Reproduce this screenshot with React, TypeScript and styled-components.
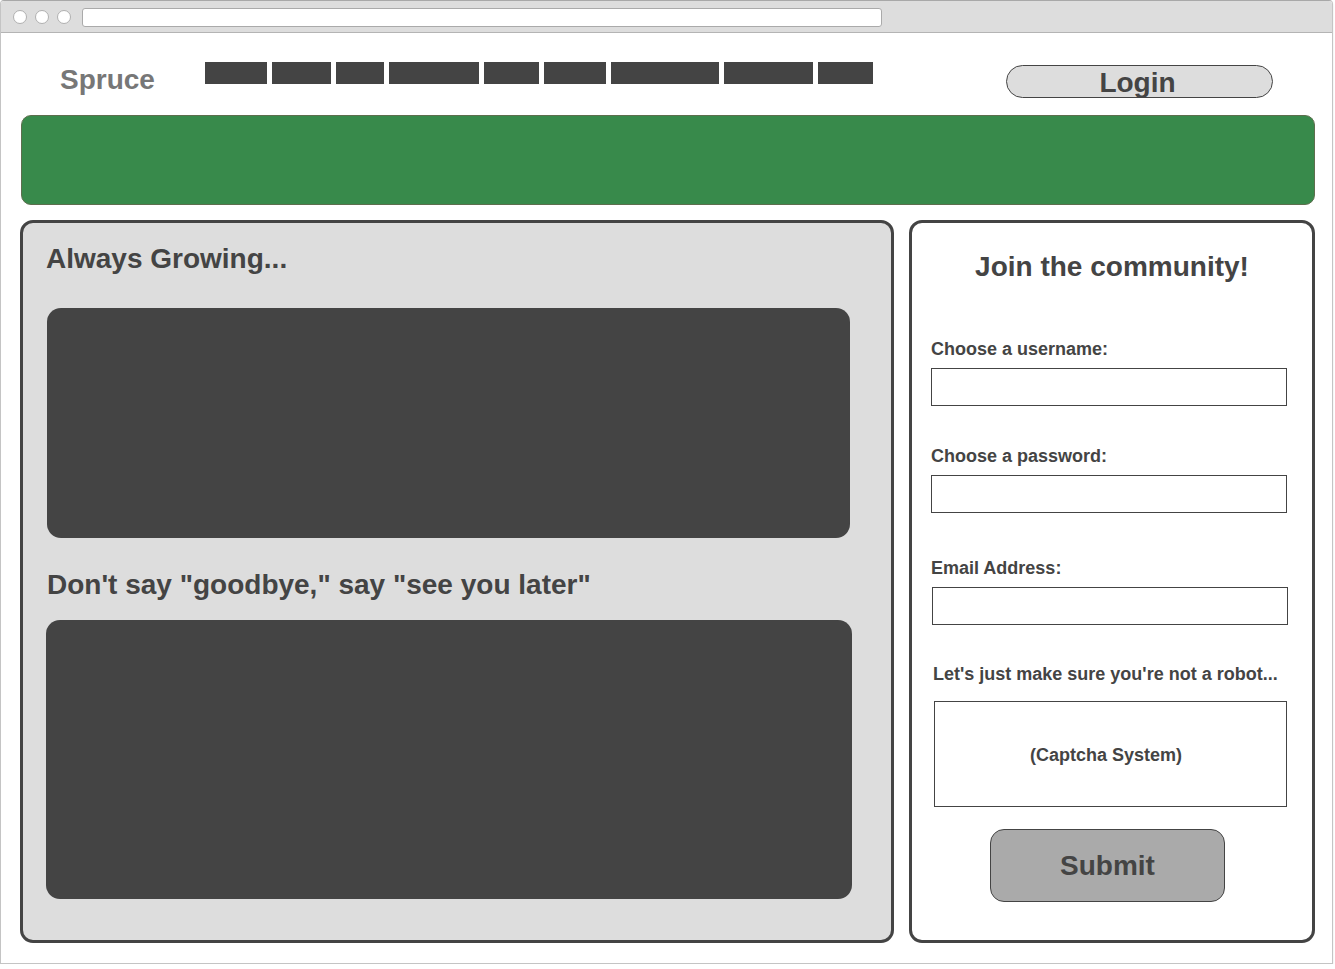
import React from "react";
import styled, { createGlobalStyle } from "styled-components";

const GlobalStyle = createGlobalStyle`
  html, body { margin: 0; padding: 0; background: #ffffff; }
  body { font-family: "Liberation Sans", Arial, sans-serif; color: #444; }
  * { box-sizing: border-box; }
`;

const Window = styled.div`
  width: 1333px;
  height: 964px;
  border: 1px solid #c4c4c4;
  border-top-color: #a8a8a8;
  border-radius: 4px 4px 0 0;
  box-shadow: 0 2px 2px rgba(0, 0, 0, 0.12);
  display: flex;
  flex-direction: column;
  overflow: hidden;
  background: #fff;
`;

const TitleBar = styled.div`
  height: 32px;
  background: #dddddd;
  border-bottom: 1px solid #b4b4b4;
  display: flex;
  align-items: center;
  padding-left: 12px;
  gap: 8px;
`;

const Dot = styled.span`
  width: 14px;
  height: 14px;
  border-radius: 50%;
  background: #fff;
  border: 1px solid #b0b0b0;
`;

const AddressBar = styled.div`
  width: 800px;
  height: 19px;
  margin-left: 3px;
  margin-top: 2px;
  background: #fff;
  border: 1px solid #aaaaaa;
  border-radius: 3px;
`;

const Header = styled.header`
  height: 82px;
  display: flex;
  align-items: flex-start;
  padding: 29px 59px 0 59px;
`;

const Logo = styled.div`
  width: 145px;
  margin-top: 2px;
  font-size: 28px;
  line-height: 32px;
  font-weight: bold;
  color: #777;
`;

const Nav = styled.nav`
  display: flex;
  gap: 5px;
`;

const NavItem = styled.span<{ $w: number }>`
  width: ${(p) => p.$w}px;
  height: 22px;
  background: #444;
`;

const LoginButton = styled.button`
  margin-left: auto;
  margin-top: 3px;
  width: 267px;
  height: 33px;
  border: 1px solid #444;
  border-radius: 17px;
  background: #dddddd;
  padding: 1px 4px 0 0;
  font-family: "Liberation Sans", Arial, sans-serif;
  font-size: 28px;
  font-weight: bold;
  line-height: 31px;
  color: #444;
`;

const Banner = styled.div`
  height: 90px;
  margin: 0 17px 0 20px;
  background: #388a4b;
  border: 1px solid #5d6e4e;
  border-radius: 10px;
`;

const Main = styled.main`
  display: flex;
  gap: 15px;
  padding: 15px 17px 20px 19px;
`;

const Panel = styled.section<{ $w: number; $bg: string }>`
  width: ${(p) => p.$w}px;
  height: 723px;
  border: 3px solid #444;
  border-radius: 13px;
  background: ${(p) => p.$bg};
  display: flex;
  flex-direction: column;
  align-items: flex-start;
`;

const LeftPanel = styled(Panel)`
  padding: 20px 0 0 24px;
`;

const RightPanel = styled(Panel)`
  padding: 28px 0 0 19px;
`;

const Heading = styled.h2<{ $mt: number; $shift?: number }>`
  margin: ${(p) => p.$mt}px 0 0 ${(p) => p.$shift ?? 0}px;
  font-size: 28px;
  line-height: 32px;
  font-weight: bold;
  color: #444;
  white-space: nowrap;
`;

const MediaBox = styled.div<{ $w: number; $h: number; $mt: number; $shift?: number }>`
  width: ${(p) => p.$w}px;
  height: ${(p) => p.$h}px;
  margin: ${(p) => p.$mt}px 0 0 ${(p) => p.$shift ?? 0}px;
  background: #444;
  border-radius: 14px;
`;

const FormTitle = styled.h2`
  margin: 0 0 0 -19px;
  width: 400px;
  text-align: center;
  font-size: 28px;
  line-height: 32px;
  font-weight: bold;
  color: #444;
`;

const Label = styled.label<{ $mt: number; $shift?: number }>`
  display: block;
  margin: ${(p) => p.$mt}px 0 0 ${(p) => p.$shift ?? 0}px;
  font-size: 18px;
  line-height: 21px;
  font-weight: bold;
  color: #444;
  white-space: nowrap;
`;

const TextInput = styled.input<{ $mt: number; $shift?: number }>`
  display: block;
  width: 356px;
  height: 38px;
  margin: ${(p) => p.$mt}px 0 0 ${(p) => p.$shift ?? 0}px;
  border: 1px solid #444;
  border-radius: 0;
  padding: 0 6px;
  background: #fff;
  outline: none;
`;

const Captcha = styled.div`
  width: 353px;
  height: 106px;
  margin: 16px 0 0 3px;
  padding: 2px 9px 0 0;
  border: 1px solid #444;
  display: flex;
  align-items: center;
  justify-content: center;
  font-size: 18px;
  font-weight: bold;
  color: #444;
`;

const SubmitButton = styled.button`
  width: 235px;
  height: 73px;
  margin: 22px 0 0 59px;
  background: #aaaaaa;
  border: 1px solid #444;
  border-radius: 14px;
  font-family: "Liberation Sans", Arial, sans-serif;
  font-size: 28px;
  font-weight: bold;
  color: #444;
  padding: 0;
`;

const navWidths = [62, 59, 48, 90, 55, 62, 108, 89, 55];

export default function App() {
  return (
    <>
      <GlobalStyle />
      <Window>
        <TitleBar>
          <Dot />
          <Dot />
          <Dot />
          <AddressBar />
        </TitleBar>
        <Header>
          <Logo>Spruce</Logo>
          <Nav>
            {navWidths.map((w, i) => (
              <NavItem key={i} $w={w} />
            ))}
          </Nav>
          <LoginButton>Login</LoginButton>
        </Header>
        <Banner />
        <Main>
          <LeftPanel $w={874} $bg="#dddddd">
            <Heading $mt={0} $shift={-1}>Always Growing...</Heading>
            <MediaBox $w={803} $h={230} $mt={33} />
            <Heading $mt={31} $shift={0}>
              Don't say "goodbye," say "see you later"
            </Heading>
            <MediaBox $w={806} $h={279} $mt={19} $shift={-1} />
          </LeftPanel>
          <RightPanel $w={406} $bg="#ffffff">
            <FormTitle>Join the community!</FormTitle>
            <Label $mt={56}>Choose a username:</Label>
            <TextInput $mt={8} />
            <Label $mt={40}>Choose a password:</Label>
            <TextInput $mt={8} type="password" />
            <Label $mt={45}>Email Address:</Label>
            <TextInput $mt={8} $shift={1} />
            <Label $mt={39} $shift={2}>
              Let's just make sure you're not a robot...
            </Label>
            <Captcha>(Captcha System)</Captcha>
            <SubmitButton>Submit</SubmitButton>
          </RightPanel>
        </Main>
      </Window>
    </>
  );
}
